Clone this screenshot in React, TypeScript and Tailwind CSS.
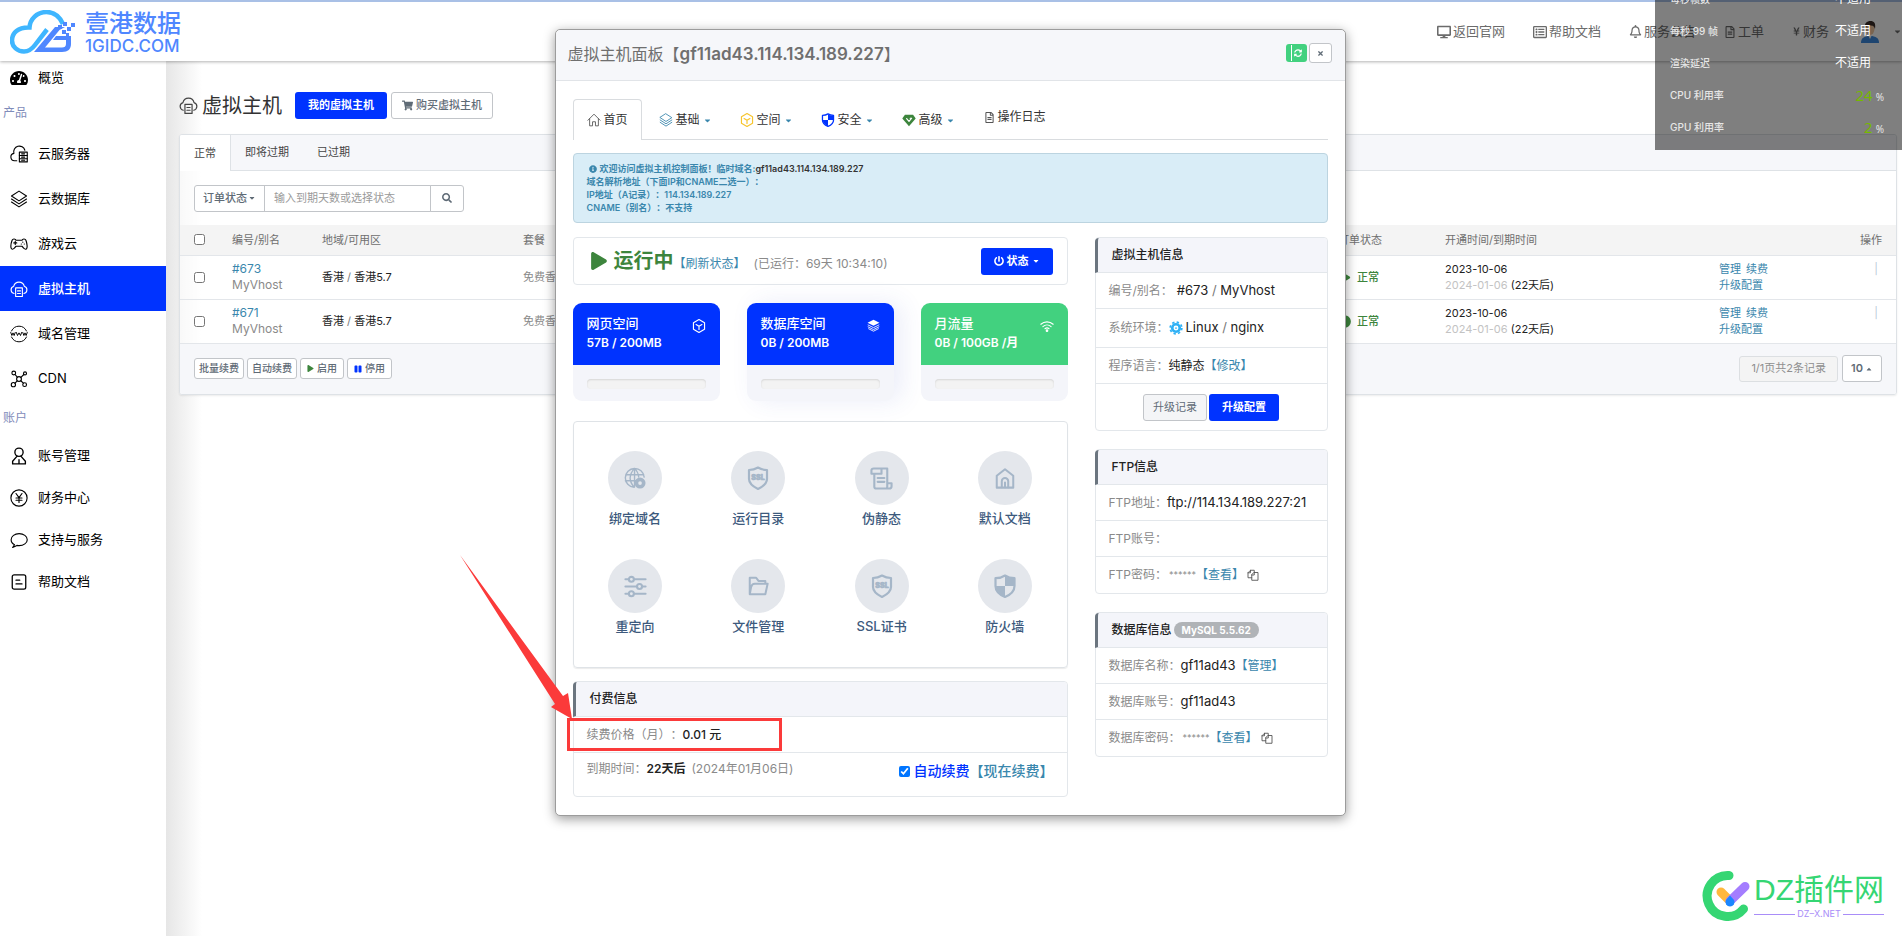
import type { ReactNode } from 'react';
import {
  FaCaretDown,
  FaCaretUp,
  FaCircle,
  FaDesktop,
  FaInfoCircle,
  FaPause,
  FaPlay,
  FaPowerOff,
  FaRegBell,
  FaRegFileAlt,
  FaRegListAlt,
  FaSearch,
  FaShoppingCart,
  FaSyncAlt,
  FaTachometerAlt,
  FaTimes,
  FaYenSign,
} from 'react-icons/fa';
import { clsx } from 'clsx';

interface IconProps {
  size?: number;
  className?: string;
}

interface SvgProps extends IconProps {
  stroke?: number;
  children: ReactNode;
}

function Svg({ size = 18, className, stroke = 1.5, children }: SvgProps) {
  return (
    <svg
      width={size}
      height={size}
      viewBox="0 0 24 24"
      fill="none"
      stroke="currentColor"
      strokeWidth={stroke}
      strokeLinecap="round"
      strokeLinejoin="round"
      className={clsx('shrink-0', className)}
      aria-hidden="true"
    >
      {children}
    </svg>
  );
}

const CloudServerIcon = (p: IconProps) => (
  <Svg {...p}>
    <path d="M9 21H6a5 5 0 0 1-.8-9.9A7.5 7.5 0 0 1 19.8 7" />
    <rect x="12.5" y="9.5" width="10.5" height="13" />
    <path d="M12.5 14h10.5M12.5 18.3h10.5M15.5 11.8h4M15.5 16.2h4M15.5 20.4h4" />
  </Svg>
);

const LayersIcon = (p: IconProps) => (
  <Svg {...p}>
    <path d="M12 1.5 22 8l-10 6.500L2 8z" />
    <path d="m2 12 10 6.500L22 12M2 16l10 6.500L22 16" />
  </Svg>
);

const GamepadIcon = (p: IconProps) => (
  <Svg {...p}>
    <path d="M8 7h8c.8-2 4.200-2.500 5.200 0 1.500 4 2 8 1.300 10.500-.6 2-2.800 1.800-4 .2L16 15H8l-2.500 2.700c-1.200 1.600-3.400 1.800-4-.2C.8 15 1.300 11 2.800 7 3.800 4.500 7.200 5 8 7z" />
    <path d="M5 10.500h4M7 8.500v4M17 9.500h.1M19 12h.1M15 12h.1" />
  </Svg>
);

const CloudDocIcon = (p: IconProps) => (
  <Svg {...p}>
    <path d="M5.500 18A5 5 0 0 1 5 8.300a7.200 7.200 0 0 1 14 0A5 5 0 0 1 18.500 18" />
    <rect x="7.500" y="10.500" width="9" height="11.500" />
    <path d="M10 14.500h4M10 18h4" />
  </Svg>
);

const WwwIcon = (p: IconProps) => (
  <Svg {...p} stroke={1.3}>
    <path d="M2 8a11 11 0 0 1 20 0M2 16a11 11 0 0 0 20 0" />
    <path d="m1 10 1.500 4L4 10.500 5.500 14 7 10M8.500 10l1.500 4 2-3.500 2 3.500 1.500-4M17 10l1.500 4 1.500-3.500 1.500 3.500L23 10" />
  </Svg>
);

const CdnIcon = (p: IconProps) => (
  <Svg {...p}>
    <circle cx="12" cy="12" r="3.200" />
    <circle cx="5" cy="4" r="2.500" />
    <circle cx="20" cy="4.500" r="2" />
    <circle cx="4.500" cy="19.500" r="2.800" />
    <circle cx="19.500" cy="19.500" r="2.500" />
    <path d="m6.700 6 3 3.600M18.500 6l-4 3.800M6.700 17.600l3-3.200M17.800 17.600l-3.400-3.300" />
  </Svg>
);

const UserIcon = (p: IconProps) => (
  <Svg {...p} stroke={1.800}>
    <circle cx="12" cy="7" r="5.500" />
    <path d="M9.500 12.200 3.500 19v3.500h17V19l-6-6.800M12 22v-5" />
  </Svg>
);

const YenIcon = (p: IconProps) => (
  <Svg {...p}>
    <circle cx="12" cy="12" r="10.800" />
    <path d="m8 6 4 5.500L16 6M12 11.500V18M8 12h8M8 15h8" />
  </Svg>
);

const ChatIcon = (p: IconProps) => (
  <Svg {...p}>
    <path d="M6 18.300C3.300 17 1.500 14.500 1.500 11.700 1.500 7 6.300 3.500 12.200 3.500S23 7 23 11.500s-4.800 8-10.800 8c-1 0-2-.1-3-.3L3.500 22z" />
  </Svg>
);

const HelpDocIcon = (p: IconProps) => (
  <Svg {...p} stroke={1.700}>
    <rect x="3" y="2.500" width="18" height="19" rx="2.500" />
    <path d="M8 9.500h5M8 14.500h8" />
  </Svg>
);

const HomeIcon = (p: IconProps) => (
  <Svg {...p}>
    <path d="M1.500 12.500 12 2l10.500 10.500M4.500 10v12H9.500v-7h5v7h5V10" />
  </Svg>
);

const CubeIcon = (p: IconProps) => (
  <Svg {...p} stroke={2}>
    <path d="m12 1 9.500 5.500v11L12 23l-9.500-5.500v-11z" />
    <path d="m7 9.500 5 3 5-3M12 12.500V18" />
  </Svg>
);

const ShieldIcon = (p: IconProps) => (
  <Svg {...p} stroke={2.200}>
    <path d="M12 1.500c3 2 6 2.700 9.500 2.700V12c0 5-3.500 8.500-9.500 11-6-2.500-9.500-6-9.500-11V4.200C6 4.200 9 3.500 12 1.500z" />
    <path d="M12 2v10h9V4.700c-3.500 0-6-.7-9-2.700zM12 22.500V12H3c.3 5 3.500 8 9 10.500z" fill="currentColor" stroke="none" />
  </Svg>
);

const GemIcon = (p: IconProps) => (
  <Svg {...p}>
    <path d="M5 3h14l4.500 6.500L12 22.500.5 9.500z" fill="currentColor" stroke="none" />
    <path d="m8 9.500 4 5 4.500-5.500H14" stroke="#fff" strokeWidth="2" />
  </Svg>
);

const StackIcon = (p: IconProps) => (
  <Svg {...p}>
    <path d="M12 1.500 23 7l-11 5.500L1 7z" fill="currentColor" stroke="none" />
    <path d="m2 11 10 5 10-5M2 14.500l10 5 10-5M3 18l9 4.500 9-4.500" strokeWidth="1.600" />
  </Svg>
);

const WifiIcon = (p: IconProps) => (
  <Svg {...p} stroke={2}>
    <path d="M1.500 9a15.500 15.500 0 0 1 21 0M5 13a10.500 10.500 0 0 1 14 0M8.500 16.700a5.500 5.500 0 0 1 7 0" />
    <circle cx="12" cy="20" r="1.300" fill="currentColor" />
  </Svg>
);

const CopyIcon = (p: IconProps) => (
  <Svg {...p} stroke={1.800}>
    <path d="M14.500 7H22v15.500H9.500V12zM14.500 7v5h-5" />
    <path d="M9.500 17.500H2V7.500l5-5h7.500V7M7 2.500v5H2" />
  </Svg>
);

const GlobeGearIcon = (p: IconProps) => (
  <Svg {...p} stroke={1.500}>
    <path d="M22 11A10.300 10.300 0 1 0 11 22.200M2 8.500h19.500M1.500 15H13M11.500 1.500C5.500 8 5.500 15.500 11 22M11.500 1.500c3 3 4.300 6 4.500 9.500M11.500 1.500v20" />
    <circle cx="17.500" cy="17.500" r="4" strokeWidth="4" />
  </Svg>
);

const SslIcon = (p: IconProps) => (
  <Svg {...p} stroke={2.200}>
    <path d="M12 1.500c2.500 1.500 5.500 2.500 9 2.500v9c0 4.500-4 7.500-9 10-5-2.500-9-5.500-9-10V4c3.500 0 6.500-1 9-2.500z" />
    <text x="12" y="14" textAnchor="middle" fontSize="7" fontWeight="900" fill="currentColor" strokeWidth="0.600">
      SSL
    </text>
  </Svg>
);

const ScrollIcon = (p: IconProps) => (
  <Svg {...p} stroke={2.200}>
    <path d="M4.500 7H1.500V3.500C1.500 2 2.500 1.500 4 1.500h14V17M4.500 7v13.500c0 1.500 1 2 2.500 2H20c1.500 0 2.500-.8 2.500-2.500V17H18v3.500c0 1-.8 2-2 2M4.500 7H12V1.500M8 11.500h7M8 15.500h7" />
  </Svg>
);

const HouseIcon = (p: IconProps) => (
  <Svg {...p} stroke={2.200}>
    <path d="M3 9.500 12 2.500l9 7v13H3z" />
    <path d="M8.500 22v-6.500a3.500 3.500 0 0 1 7 0V22M12 22v-5" />
  </Svg>
);

const SlidersIcon = (p: IconProps) => (
  <Svg {...p} stroke={2.200}>
    <path d="M1.500 4.500h3.500M10.500 4.500h12M1.500 12h12M19 12h3.500M1.500 19.500h3.500M10.500 19.500h12" />
    <circle cx="7.700" cy="4.500" r="2.600" />
    <circle cx="16.200" cy="12" r="2.600" />
    <circle cx="7.700" cy="19.500" r="2.600" />
  </Svg>
);

const FolderIcon = (p: IconProps) => (
  <Svg {...p} stroke={2.200}>
    <path d="M3 21V3h7l2.500 3.500H20V9.500M3 21h17l2.500-11.500H8.500C6 9.500 5 11 4.500 13z" />
  </Svg>
);

function SnowflakeIcon() {
  return (
    <svg width="14" height="14" viewBox="0 0 24 24" className="text-[#2fb1f5]" fill="none" stroke="currentColor" aria-hidden="true">
      <circle cx="12" cy="12" r="6.500" strokeWidth="4.500" />
      <circle cx="12" cy="12" r="10" strokeWidth="3" strokeDasharray="4 3.850" />
      <circle cx="12" cy="12" r="1.500" fill="currentColor" stroke="none" />
    </svg>
  );
}

function Logo() {
  return (
    <a href="#" className="flex items-center gap-[9px] text-[#4f87ff]" aria-label="壹港数据">
      <svg width="66" height="44" viewBox="0 0 66 44" fill="none" aria-hidden="true">
        <path
          d="M53 14C49 5 42 2 36.500 2 27 2 20 9 19.500 17.500 8 17 2 23 2 30.500 2 37 7.500 41.500 14 41.500c5 0 8-2.500 11-6.500l12-15.500"
          stroke="#3fb6ff"
          strokeWidth="4.500"
        />
        <path d="M55 17H45L24 42h28c6 0 9-3 9-8v-8H46l-3 4h13v4c0 2.500-1.500 3.500-4 3.500H35L49.500 20z" fill="#4f87ff" />
        <path d="M48 15h4v4h-4zM53 12h4v4h-4zM57 17h4v4h-4zM52 20h4v4h-4zM61 13h4v4h-4zM56 23h3v3h-3z" fill="#4f87ff" />
      </svg>
      <span className="flex flex-col pt-1">
        <span className="text-2xl leading-6 font-medium">壹港数据</span>
        <span className="text-[17px] leading-5 font-medium">1GIDC.COM</span>
      </span>
    </a>
  );
}

function Avatar() {
  return (
    <svg width="18" height="22" viewBox="0 0 18 22" aria-hidden="true">
      <path d="M0 22c0-5 3-7 9-7s9 2 9 7z" fill="#3c8be0" />
      <path d="m7 14 2 4 2-4z" fill="#fff" />
      <ellipse cx="9" cy="8" rx="4.500" ry="6" fill="#f2c9a0" />
      <path d="M4 8C3 2 6 0 9.500 0S15 2 14 8c-1-3-2-3.500-5-3.500S5 5 4 8z" fill="#3a2d28" />
    </svg>
  );
}

const topLinks = [
  { label: '返回官网', icon: <FaDesktop size={14} /> },
  { label: '帮助文档', icon: <FaRegListAlt size={14} /> },
  { label: '服务公告', icon: <FaRegBell size={13} /> },
  { label: '工单', icon: <FaRegFileAlt size={12} /> },
  { label: '财务', icon: <FaYenSign size={9} /> },
];

function TopBar() {
  return (
    <header className="relative z-10 flex h-[61px] items-center justify-between border-t-2 border-[#a9c0e6] bg-white pl-2.5 shadow-[0_1px_3px_rgba(0,0,0,0.3)]">
      <Logo />
      <nav className="flex items-center text-[13px] text-[#6b6b6b]">
        {topLinks.map((l) => (
          <a key={l.label} href="#" className="flex items-center gap-0.5 px-3.5">
            {l.icon}
            {l.label}
          </a>
        ))}
        <button type="button" aria-label="用户菜单" className="ml-[18px] flex items-center gap-3.5">
          <Avatar />
          <FaCaretDown size={9} />
        </button>
      </nav>
    </header>
  );
}

const products = [
  { label: '云服务器', icon: <CloudServerIcon /> },
  { label: '云数据库', icon: <LayersIcon /> },
  { label: '游戏云', icon: <GamepadIcon /> },
  { label: '虚拟主机', icon: <CloudDocIcon />, active: true },
  { label: '域名管理', icon: <WwwIcon /> },
  { label: 'CDN', icon: <CdnIcon /> },
];

const account = [
  { label: '账号管理', icon: <UserIcon /> },
  { label: '财务中心', icon: <YenIcon /> },
  { label: '支持与服务', icon: <ChatIcon /> },
  { label: '帮助文档', icon: <HelpDocIcon /> },
];

function Sidebar() {
  return (
    <aside className="w-[166px] shrink-0 bg-white text-[13px] text-black">
      <a href="#" className="flex h-[34px] items-center gap-2.5 pl-2.5">
        <FaTachometerAlt size={18} />
        概览
      </a>
      <h2 className="flex h-9 items-center pl-[3px] text-xs text-[#7f8cba]">产品</h2>
      {products.map((p) => (
        <a
          key={p.label}
          href="#"
          className={clsx('flex h-[45px] items-center gap-2.5 pl-2.5', p.active && 'bg-[#0033ff] font-medium text-white')}
        >
          {p.icon}
          {p.label}
        </a>
      ))}
      <h2 className="flex h-[34px] items-center pl-[3px] text-xs text-[#7f8cba]">账户</h2>
      {account.map((a) => (
        <a key={a.label} href="#" className="flex h-[42px] items-center gap-2.5 pl-2.5">
          {a.icon}
          {a.label}
        </a>
      ))}
    </aside>
  );
}

const outlineBtn = 'rounded-[3px] border border-[#c2c5c9] bg-white text-[#5f6b76]';

const orders = [
  { id: '#673', name: 'MyVhost', running: true },
  { id: '#671', name: 'MyVhost', running: false },
];

function OrderTable() {
  return (
    <table className="w-full table-fixed text-left text-[11px]">
      <colgroup>
        <col className="w-[38px]" />
        <col className="w-[90px]" />
        <col className="w-[201px]" />
        <col />
        <col className="w-[107px]" />
        <col className="w-[274px]" />
        <col className="w-[191px]" />
      </colgroup>
      <thead className="h-[30px] border-b border-[#e3e6ea] bg-[#f4f4f4] text-[#6f6f6f]">
        <tr>
          <th className="pl-3.5">
            <input type="checkbox" aria-label="全选" className="block size-[11px]" />
          </th>
          <th className="pl-3.5 font-normal">编号/别名</th>
          <th className="pl-3.5 font-normal">地域/可用区</th>
          <th className="pl-3.5 font-normal">套餐</th>
          <th className="pl-3.5 font-normal">订单状态</th>
          <th className="pl-3.5 font-normal">开通时间/到期时间</th>
          <th className="pr-3.5 text-right font-normal">操作</th>
        </tr>
      </thead>
      <tbody>
        {orders.map((o) => (
          <tr key={o.id} className="h-11 border-b border-[#e3e6ea] leading-4 text-[#222]">
            <td className="pl-3.5">
              <input type="checkbox" aria-label={o.id} className="block size-[11px]" />
            </td>
            <td className="pl-3.5 text-xs leading-4 text-[#8a8a8a]">
              <a href="#" className="block text-[#3a87ad]">
                {o.id}
              </a>
              {o.name}
            </td>
            <td className="pl-3.5">
              香港 <span className="text-[#777]">/</span> 香港5.7
            </td>
            <td className="pl-3.5 text-[#8a8a8a]">免费香港</td>
            <td className="pl-3.5">
              <span className="flex items-center gap-1.5 font-medium text-[#3d853d]">
                {o.running ? <FaPlay size={13} /> : <FaCircle size={13} />}
                正常
              </span>
            </td>
            <td className="pl-3.5">
              2023-10-06
              <br />
              <span className="text-[#c3c3c3]">2024-01-06</span> (22天后)
            </td>
            <td className="pr-3.5 pl-3.5">
              <div className="flex justify-between text-[#3a87ad]">
                <div>
                  <div className="flex gap-[5px]">
                    <a href="#">管理</a>
                    <a href="#">续费</a>
                  </div>
                  <a href="#">升级配置</a>
                </div>
                <span className="pr-1 text-[#b9cad8]">|</span>
              </div>
            </td>
          </tr>
        ))}
      </tbody>
    </table>
  );
}

function OrderPage() {
  return (
    <main className="flex-1 bg-gradient-to-r from-[#e6e6e6] via-white via-[36px] to-white pr-[5px] pl-[13px]">
      <div className="flex h-[73px] items-center pt-4">
        <CloudDocIcon size={19} className="text-[#444]" />
        <h1 className="ml-1 text-xl text-[#333]">虚拟主机</h1>
        <button type="button" className="ml-[13px] h-[27px] rounded-[3px] bg-[#0033ff] px-[13px] text-[11px] font-bold text-white">
          我的虚拟主机
        </button>
        <button type="button" className={clsx(outlineBtn, 'ml-1 flex h-[27px] items-center gap-[3px] px-2.5 text-[11px] font-medium')}>
          <FaShoppingCart size={11} />
          购买虚拟主机
        </button>
      </div>

      <section className="overflow-hidden rounded-[3px] border border-[#dee2e6] bg-white/60 shadow-[0_1px_2px_rgba(0,0,0,0.08)]">
        <div className="flex h-9 bg-[#f6f7fa] text-[11px] text-[#444]">
          <button type="button" className="border-r border-[#dee2e6] bg-white px-3.5">
            正常
          </button>
          <button type="button" className="border-b border-[#dee2e6] px-3.5">
            即将过期
          </button>
          <button type="button" className="border-b border-[#dee2e6] px-3.5">
            已过期
          </button>
          <div className="flex-1 border-b border-[#dee2e6]" />
        </div>

        <div className="flex h-[54px] items-center px-3.5 text-[11px]">
          <button type="button" className={clsx(outlineBtn, 'flex h-[27px] items-center gap-px rounded-r-none px-2 font-medium')}>
            订单状态
            <FaCaretDown size={8} />
          </button>
          <input
            type="text"
            aria-label="到期天数"
            placeholder="输入到期天数或选择状态"
            className="-ml-px h-[27px] w-[167px] border border-[#c2c5c9] bg-white px-[9px] placeholder:text-[#9a9a9a]"
          />
          <button type="button" aria-label="搜索" className={clsx(outlineBtn, '-ml-px flex h-[27px] w-[34px] items-center justify-center rounded-l-none')}>
            <FaSearch size={10} />
          </button>
        </div>

        <OrderTable />

        <div className="flex h-[50px] items-center justify-between bg-[#f6f7fa] px-3.5 text-[10px]">
          <div className="flex gap-[3px] font-medium">
            <button type="button" className={clsx(outlineBtn, 'h-[21px] px-1')}>
              批量续费
            </button>
            <button type="button" className={clsx(outlineBtn, 'h-[21px] px-1')}>
              自动续费
            </button>
            <button type="button" className={clsx(outlineBtn, 'flex h-[21px] items-center gap-[3px] px-1.5')}>
              <FaPlay size={7} className="text-[#3d853d]" />
              启用
            </button>
            <button type="button" className={clsx(outlineBtn, 'flex h-[21px] items-center gap-[3px] px-1.5')}>
              <FaPause size={8} className="text-[#0033ff]" />
              停用
            </button>
          </div>
          <div className="flex items-center gap-1 text-[11px]">
            <span className="flex h-[26px] items-center rounded-[3px] border border-[#dcdfe2] bg-[#f4f4f4] px-[11px] text-[#8f8f8f]">
              1/1页共2条记录
            </span>
            <button type="button" className={clsx(outlineBtn, 'flex h-[27px] w-10 items-center justify-center gap-0.5 font-semibold')}>
              10
              <FaCaretUp size={8} />
            </button>
          </div>
        </div>
      </section>
    </main>
  );
}

const panelTabs = [
  { label: '基础', icon: <LayersIcon size={14} className="text-[#3a87ad]" /> },
  { label: '空间', icon: <CubeIcon size={14} className="text-[#f7c52d]" /> },
  { label: '安全', icon: <ShieldIcon size={14} className="text-[#0033ff]" /> },
  { label: '高级', icon: <GemIcon size={14} className="text-[#3d853d]" /> },
];

function PanelTabs() {
  return (
    <nav className="flex h-[41px] items-stretch text-xs text-[#333]">
      <a href="#" className="flex items-center gap-[3px] rounded-t-[4px] border border-b-0 border-[#d9dcdf] px-[13px]">
        <HomeIcon size={14} className="text-[#555]" />
        首页
      </a>
      {panelTabs.map((t) => (
        <a key={t.label} href="#" className="flex items-center gap-[3px] border-b border-[#d9dcdf] pt-0.5 pr-[11px] pl-[17px]">
          {t.icon}
          {t.label}
          <FaCaretDown size={9} className="text-[#3a87ad]" />
        </a>
      ))}
      <a href="#" className="flex items-center gap-[3px] border-b border-[#d9dcdf] pb-1 pl-[18px]">
        <FaRegFileAlt size={11} className="text-[#555]" />
        操作日志
      </a>
      <div className="flex-1 border-b border-[#d9dcdf]" />
    </nav>
  );
}

interface UsageProps {
  title: string;
  value: string;
  icon: ReactNode;
  green?: boolean;
  raised?: boolean;
}

function UsageCard({ title, value, icon, green, raised }: UsageProps) {
  return (
    <div className={clsx('flex-1 overflow-hidden rounded-[9px] bg-[#f4f5fa]', raised && 'shadow-[8px_0_24px_rgba(60,80,200,0.1)]')}>
      <div className={clsx('flex h-[62px] justify-between px-3.5 pt-2.5 text-white', green ? 'bg-[#42d17f]' : 'bg-[#0033ff]')}>
        <div className="text-[13px] leading-5">
          <h3 className="font-medium">{title}</h3>
          <p className="text-xs leading-5 font-semibold">{value}</p>
        </div>
        <div className="pt-1.5">{icon}</div>
      </div>
      <div className="px-3.5 pt-3.5 pb-3">
        <div className="h-2.5 rounded-[4px] bg-[#f3f3f3] shadow-[inset_0_1px_2px_rgba(0,0,0,0.12)]" />
      </div>
    </div>
  );
}

const shortcuts = [
  { label: '绑定域名', icon: <GlobeGearIcon size={22} /> },
  { label: '运行目录', icon: <SslIcon size={24} /> },
  { label: '伪静态', icon: <ScrollIcon size={23} /> },
  { label: '默认文档', icon: <HouseIcon size={22} /> },
  { label: '重定向', icon: <SlidersIcon size={23} /> },
  { label: '文件管理', icon: <FolderIcon size={22} /> },
  { label: 'SSL证书', icon: <SslIcon size={24} /> },
  { label: '防火墙', icon: <ShieldIcon size={24} /> },
];

function InfoPanel({ title, children }: { title: ReactNode; children: ReactNode }) {
  return (
    <section className="rounded-[4px] border border-[#e3e7eb] text-xs text-[#8a8a8a]">
      <h3 className="-ml-px flex h-[35px] items-center gap-0.5 rounded-t-[4px] border-b border-l-[3px] border-b-[#e3e7eb] border-l-[#6b757f] bg-[#f4f5fa] pl-3.5 font-medium text-[#222]">
        {title}
      </h3>
      <div className="divide-y divide-[#e3e7eb]">{children}</div>
    </section>
  );
}

function InfoRow({ label, children }: { label: string; children?: ReactNode }) {
  return (
    <div className="flex h-9 items-center px-[13px]">
      <span>{label}</span>
      {children}
    </div>
  );
}

function HiddenPassword() {
  return (
    <>
      <span className="ml-0.5 text-[9px]">******</span>
      <a href="#" className="text-[#3a87ad]">
        【查看】
      </a>
      <button type="button" aria-label="复制" className="ml-[3px] text-[#555]">
        <CopyIcon size={12} />
      </button>
    </>
  );
}

function HostInfo() {
  return (
    <div className="flex w-[233px] shrink-0 flex-col gap-[18px]">
      <InfoPanel title="虚拟主机信息">
        <InfoRow label="编号/别名：">
          <span className="ml-1 text-[13px] text-[#222]">
            #673 <span className="text-[#777]">/</span> MyVhost
          </span>
        </InfoRow>
        <div className="flex h-[39px] items-center px-[13px]">
          <span>系统环境：</span>
          <SnowflakeIcon />
          <span className="ml-[3px] text-[13px] text-[#222]">
            Linux <span className="text-[#777]">/</span> nginx
          </span>
        </div>
        <InfoRow label="程序语言：">
          <span className="text-[#222]">纯静态</span>
          <a href="#" className="text-[#3a87ad]">
            【修改】
          </a>
        </InfoRow>
        <div className="flex h-[46px] items-center justify-center gap-0.5 text-[11px]">
          <button type="button" className="h-[27px] rounded-[3px] border border-[#c2c5c9] bg-[#f4f5f7] px-[9px] text-[#5f6b76]">
            升级记录
          </button>
          <button type="button" className="h-[27px] rounded-[3px] bg-[#0033ff] px-[13px] font-bold text-white">
            升级配置
          </button>
        </div>
      </InfoPanel>

      <InfoPanel title="FTP信息">
        <InfoRow label="FTP地址：">
          <span className="text-[13px] text-[#222]">ftp://114.134.189.227:21</span>
        </InfoRow>
        <InfoRow label="FTP账号：" />
        <InfoRow label="FTP密码：">
          <HiddenPassword />
        </InfoRow>
      </InfoPanel>

      <InfoPanel
        title={
          <>
            数据库信息
            <span className="rounded-full bg-[#b0b3b7] px-2 text-[10px] leading-4 font-bold text-white">MySQL 5.5.62</span>
          </>
        }
      >
        <InfoRow label="数据库名称：">
          <span className="text-[13px] text-[#222]">gf11ad43</span>
          <a href="#" className="text-[#3a87ad]">
            【管理】
          </a>
        </InfoRow>
        <InfoRow label="数据库账号：">
          <span className="text-[13px] text-[#222]">gf11ad43</span>
        </InfoRow>
        <InfoRow label="数据库密码：">
          <HiddenPassword />
        </InfoRow>
      </InfoPanel>
    </div>
  );
}

function HostDialog() {
  return (
    <div
      role="dialog"
      aria-labelledby="host-title"
      className="absolute top-[29px] right-0.5 left-0 z-20 mx-auto w-[791px] rounded-[5px] border border-[#9c9c9c] bg-white shadow-[0_3px_12px_rgba(0,0,0,0.4)]"
    >
      <div className="flex h-[51px] items-center justify-between rounded-t-[5px] border-b border-[#e1e4e8] bg-[#f6f7fa] pr-[13px] pl-3">
        <h2 id="host-title" className="text-base text-[#6f6f6f]">
          虚拟主机面板【<span className="text-[17px] font-semibold">gf11ad43.114.134.189.227</span>】
        </h2>
        <div className="flex items-center gap-0.5 pb-1">
          <button type="button" aria-label="刷新" className="flex h-[18px] items-center gap-0.5 rounded-[3px] bg-[#42d17f] px-[5px] text-white">
            <span className="h-4 w-px bg-white" />
            <FaSyncAlt size={8} />
          </button>
          <button type="button" aria-label="关闭" className={clsx(outlineBtn, 'flex h-5 w-[23px] items-center justify-center')}>
            <FaTimes size={7} />
          </button>
        </div>
      </div>

      <div className="px-[17px] py-[18px]">
        <PanelTabs />

        <div className="mt-[13px] h-[70px] rounded-[4px] border border-[#bcd4e0] bg-[#d9edf7] px-[13px] py-2 text-[9px] leading-[13px] font-semibold text-[#3a87ad]">
          <p className="flex items-center pl-0.5">
            <FaInfoCircle size={8} className="mr-[3px]" />
            欢迎访问虚拟主机控制面板！临时域名:<span className="text-[#333]">gf11ad43.114.134.189.227</span>
          </p>
          <p>域名解析地址（下面IP和CNAME二选一）：</p>
          <p>IP地址（A记录）：114.134.189.227</p>
          <p>CNAME（别名）：不支持</p>
        </div>

        <div className="mt-3.5 flex gap-[27px]">
          <div className="min-w-0 flex-1">
            <div className="flex h-12 items-center rounded-[4px] border border-[#e3e7eb] pr-3.5 pl-4 text-xs">
              <FaPlay size={18} className="text-[#3d853d]" />
              <strong className="ml-1.5 text-xl text-[#3d853d]">运行中</strong>
              <a href="#" className="pt-1.5 text-[#3a87ad]">
                【刷新状态】
              </a>
              <span className="ml-2 pt-1.5 text-[#8a8a8a]">(已运行：69天 10:34:10)</span>
              <button
                type="button"
                className="ml-auto flex h-[27px] w-[72px] items-center justify-center gap-[3px] rounded-[3px] bg-[#0033ff] text-[11px] font-bold text-white"
              >
                <FaPowerOff size={10} />
                状态
                <FaCaretDown size={8} />
              </button>
            </div>

            <div className="mt-[18px] flex gap-[27px]">
              <UsageCard title="网页空间" value="57B / 200MB" icon={<CubeIcon size={14} />} />
              <UsageCard title="数据库空间" value="0B / 200MB" icon={<StackIcon size={13} />} raised />
              <UsageCard title="月流量" value="0B / 100GB /月" icon={<WifiIcon size={14} />} green />
            </div>

            <div className="mt-5 grid grid-cols-4 rounded-[4px] border border-[#dfe3e7] pt-[29px] shadow-[0_1px_1px_rgba(0,0,0,0.08)]">
              {shortcuts.map((s) => (
                <a key={s.label} href="#" className="flex h-[108px] flex-col items-center gap-1 text-[13px] font-medium text-[#3d5a7d]">
                  <span className="flex size-[54px] items-center justify-center rounded-full bg-[#e4e7ec] text-[#a5b6c8]">{s.icon}</span>
                  {s.label}
                </a>
              ))}
            </div>

            <div className="relative mt-[13px]">
              <InfoPanel title="付费信息">
                <InfoRow label="续费价格（月）：">
                  <span className="font-medium text-[#222]">0.01 元</span>
                </InfoRow>
                <div className="flex h-[43px] items-start px-[13px] pt-2">
                  <span>到期时间：</span>
                  <strong className="font-semibold text-[#222]">22天后</strong>
                  <span className="ml-1.5">(2024年01月06日)</span>
                  <div className="ml-auto flex items-center text-sm leading-5 font-medium">
                    <label className="flex items-center gap-1 text-[#0033ff]">
                      <input type="checkbox" defaultChecked className="size-[11px]" />
                      自动续费
                    </label>
                    <a href="#" className="text-[#3a87ad]">
                      【现在续费】
                    </a>
                  </div>
                </div>
              </InfoPanel>
              {/* highlight around the renewal price */}
              <div className="absolute top-[37px] -left-1.5 h-[33px] w-[215px] border-3 border-[#fb3a3a]" />
              <svg width="114" height="166" viewBox="0 0 114 166" className="absolute -top-[127px] -left-[114px]" aria-hidden="true">
                <path d="M1 1 104 142l5-3 4 26-21-12 4-3z" fill="#fb3a3a" />
              </svg>
            </div>
          </div>

          <HostInfo />
        </div>
      </div>
    </div>
  );
}

const stats = [
  { label: '每秒帧数', value: '不适用' },
  { label: '每秒 99 帧', value: '不适用' },
  { label: '渲染延迟', value: '不适用' },
  { label: 'CPU 利用率', value: '24', unit: '%' },
  { label: 'GPU 利用率', value: '2', unit: '%' },
];

function PerfOverlay() {
  return (
    <div className="absolute top-0 right-0 z-30 h-[150px] w-[247px] overflow-hidden bg-black/50">
      <dl className="-mt-[17px] text-white">
        {stats.map((s) => (
          <div key={s.label} className="flex h-8 items-center justify-between pr-[18px] pl-[15px]">
            <dt className="text-[10px] font-medium text-[#e6e6e6]">{s.label}</dt>
            {s.unit ? (
              <dd className="flex items-baseline gap-[3px] font-['Noto_Sans',sans-serif] text-[15px] text-[#76b900]">
                {s.value}
                <span className="text-[10px] text-[#e6e6e6]">{s.unit}</span>
              </dd>
            ) : (
              <dd className="pr-[13px] text-xs">{s.value}</dd>
            )}
          </div>
        ))}
      </dl>
    </div>
  );
}

function Watermark() {
  return (
    <div className="absolute right-[18px] bottom-3.5 flex items-center gap-1">
      <svg width="48" height="52" viewBox="0 0 48 52" fill="none" strokeLinecap="round" aria-hidden="true">
        <path d="M27 5.500A20.500 20.500 0 1 0 41.500 39" stroke="#35d673" strokeWidth="9" />
        <path d="m19 22 9 9" stroke="#ffb83d" strokeWidth="9" />
        <path d="m28 31 15-14.500" stroke="#a47dff" strokeWidth="9" />
        <path d="m28 25.500 4 4.500a4.500 4.500 0 1 1-8 0z" fill="#1a86ff" />
      </svg>
      <div className="flex flex-col">
        <span className="font-['Liberation_Sans','Noto_Sans_CJK_SC',sans-serif] text-[30px] leading-9 text-[#35d673]">DZ插件网</span>
        <span className="flex items-center gap-0.5 text-[9px] leading-3 text-[#a98df8]">
          <span className="h-px flex-1 bg-[#a98df8]" />
          DZ–X.NET
          <span className="h-px flex-1 bg-[#a98df8]" />
        </span>
      </div>
    </div>
  );
}

export default function App() {
  return (
    <div className="relative flex min-h-screen flex-col bg-white font-['Inter','Noto_Sans_CJK_SC',sans-serif] [text-spacing-trim:space-all]">
      <TopBar />
      <div className="flex flex-1">
        <Sidebar />
        <OrderPage />
      </div>
      <HostDialog />
      <PerfOverlay />
      <Watermark />
    </div>
  );
}
